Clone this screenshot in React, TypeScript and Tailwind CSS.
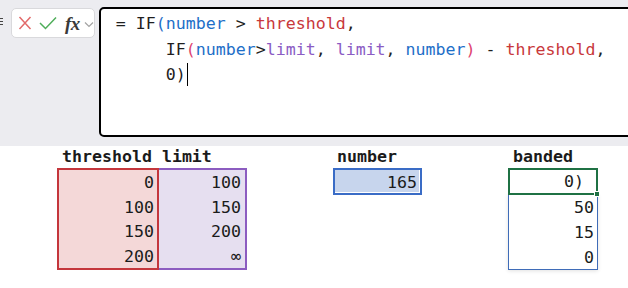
import React from "react";

const mono = "font-['DejaVu_Sans_Mono',monospace]";

function Grip() {
  return (
    <div className="flex flex-col gap-[2px] mt-[11px] w-[3px]">
      <div className="h-[1px] w-[3px] bg-[#444]" />
      <div className="h-[1px] w-[3px] bg-[#444]" />
      <div className="h-[1px] w-[3px] bg-[#444]" />
    </div>
  );
}

function IconBox() {
  return (
    <div className="ml-[8px] mt-[1px] w-[85px] h-[30px] bg-white border border-[#d9d9dc] rounded-[5px] flex items-center pl-[6px]">
      <svg width="14" height="16" viewBox="0 0 14 16" className="shrink-0">
        <path d="M1.5 2 L12.5 14 M12.5 2 L1.5 14" stroke="#e26a6a" strokeWidth="1.5" fill="none" />
      </svg>
      <svg width="18" height="14" viewBox="0 0 18 14" className="ml-[7px] shrink-0">
        <path d="M1 7 L6.5 12.5 L17 1.5" stroke="#4fae5a" strokeWidth="1.5" fill="none" />
      </svg>
      <span className="ml-[8px] font-['Liberation_Serif',serif] italic font-semibold text-[19px] leading-none text-[#3a3a3a] tracking-[-0.5px]">
        fx
      </span>
      <svg width="10" height="7" viewBox="0 0 10 7" className="ml-[4px] mt-[2px] shrink-0">
        <path d="M1 1.5 L5 5.5 L9 1.5" stroke="#a3a3a3" strokeWidth="1.2" fill="none" />
      </svg>
    </div>
  );
}

function Formula() {
  const num = "text-[#1e6fc8]";
  const thr = "text-[#c8383b]";
  const lim = "text-[#8b5cc4]";
  const par = "text-[#de4470]";
  return (
    <div
      className={`ml-[4px] w-[560px] h-[130px] shrink-0 bg-white border-2 border-black rounded-[5px] pl-[15px] pt-[2px] ${mono} text-[16.6px] leading-[25.5px] text-[#1f1f1f] whitespace-pre`}
    >
      <div>
        {"= IF"}
        <span className="text-[#1e6fc8]">(</span>
        <span className={num}>number</span>
        {" > "}
        <span className={thr}>threshold</span>
        {","}
      </div>
      <div>
        {"     IF"}
        <span className={par}>(</span>
        <span className={num}>number</span>
        {">"}
        <span className={lim}>limit</span>
        {", "}
        <span className={lim}>limit</span>
        {", "}
        <span className={num}>number</span>
        <span className={par}>)</span>
        {" - "}
        <span className={thr}>threshold</span>
        {","}
      </div>
      <div className="flex items-center">
        <span>{"     0)"}</span>
        <span className="inline-block w-[1px] h-[23px] bg-black ml-[1px]" />
      </div>
    </div>
  );
}

export default function App() {
  const thresholds = ["0", "100", "150", "200"];
  const limits = ["100", "150", "200", "∞"];
  const banded = ["50", "15", "0"];
  return (
    <div className="w-[628px] h-[288px] overflow-hidden bg-white text-[#1b1b1b]">
      <div className="h-[146px] bg-[#ececf0] flex items-start pt-[7px]">
        <Grip />
        <IconBox />
        <Formula />
      </div>

      <div className={`flex items-start ${mono} text-[16.6px]`}>
        {/* threshold / limit */}
        <div className="ml-[57px] flex flex-col">
          <div className="h-[22px] leading-[22px] font-bold pl-[5px] whitespace-pre">threshold limit</div>
          <div className="flex">
            <div className="w-[102px] border-2 border-[#c4363c] bg-[#f4d8d8] z-10">
              {thresholds.map((t) => (
                <div key={t} className="h-[24.5px] leading-[24.5px] pt-[1px] text-right pr-[3px]">
                  {t}
                </div>
              ))}
            </div>
            <div className="w-[88px] border-2 border-l-0 border-[#8c5cc0] bg-[#e6dff0]">
              {limits.map((t) => (
                <div key={t} className="h-[24.5px] leading-[24.5px] pt-[1px] text-right pr-[4px]">
                  {t}
                </div>
              ))}
            </div>
          </div>
        </div>

        {/* number */}
        <div className="ml-[86px] flex flex-col">
          <div className="h-[22px] leading-[22px] font-bold pl-[4px]">number</div>
          <div className="w-[89px] h-[27px] border-2 border-[#3a6cc6] bg-white">
            <div className="h-[22px] mr-[1px] bg-[#c7d5ed] text-right pr-[2px] leading-[23px] pt-[1px]">165</div>
          </div>
        </div>

        {/* banded */}
        <div className="ml-[86px] flex flex-col">
          <div className="h-[22px] leading-[22px] font-bold pl-[5px]">banded</div>
          <div className="relative w-[90px]">
            <div className="relative z-10 h-[27px] border-2 border-[#1f7144] bg-white text-right pr-[12px] leading-[23px]">
              0)
              <div className="absolute right-[-4px] bottom-[-4px] w-[6px] h-[6px] bg-[#1f7144] border border-white" />
            </div>
            <div className="-mt-[1px] h-[76px] border border-t-0 border-[#3f6cb8] bg-white shadow-[0_1px_4px_rgba(0,0,0,0.12)]">
              {banded.map((t) => (
                <div key={t} className="h-[25px] leading-[25px] pt-[1px] text-right pr-[3px]">
                  {t}
                </div>
              ))}
            </div>
          </div>
        </div>
      </div>
    </div>
  );
}
